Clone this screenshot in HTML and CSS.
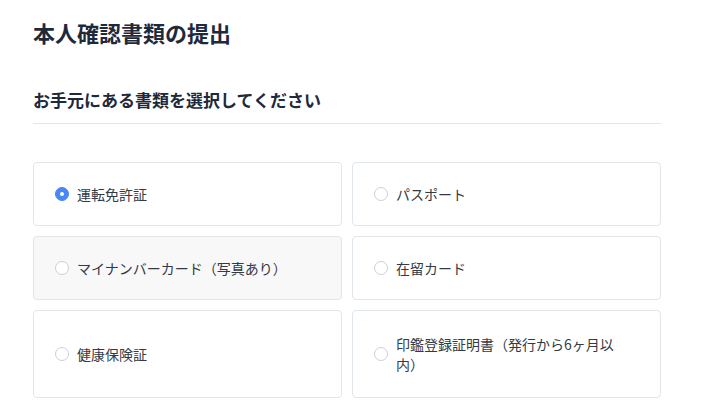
FILE: index.html
```html
<!DOCTYPE html>
<html lang="ja">
<head>
<meta charset="utf-8">
<title>本人確認書類の提出</title>
<link rel="stylesheet" href="styles.css">
</head>
<body>
<main class="page">
  <h1 class="title">本人確認書類の提出</h1>
  <h2 class="subtitle">お手元にある書類を選択してください</h2>
  <div class="options">
    <label class="option">
      <span class="radio radio-checked"></span>
      <span class="option-text">運転免許証</span>
    </label>
    <label class="option">
      <span class="radio"></span>
      <span class="option-text">パスポート</span>
    </label>
    <label class="option option-hover">
      <span class="radio"></span>
      <span class="option-text">マイナンバーカード（写真あり）</span>
    </label>
    <label class="option">
      <span class="radio"></span>
      <span class="option-text">在留カード</span>
    </label>
    <label class="option">
      <span class="radio"></span>
      <span class="option-text">健康保険証</span>
    </label>
    <label class="option option-tall">
      <span class="radio"></span>
      <span class="option-text">印鑑登録証明書（発行から6ヶ月以内）</span>
    </label>
  </div>
</main>
</body>
</html>
```
FILE: styles.css
```css
* {
  box-sizing: border-box;
}

html, body {
  margin: 0;
  padding: 0;
  background: #ffffff;
}

body {
  font-family: "Noto Sans CJK JP", "Noto Sans", sans-serif;
  color: #1f2937;
}

.page {
  width: 724px;
  padding: 18px 63px 0 33px;
}

.title {
  margin: 0;
  font-size: 22px;
  line-height: 28px;
  font-weight: 700;
  color: #1e293b;
}

.subtitle {
  margin: 42px 0 0;
  padding-bottom: 11px;
  border-bottom: 1px solid #e2e6ea;
  font-size: 17px;
  line-height: 24px;
  font-weight: 700;
  color: #1e293b;
}

.options {
  margin-top: 38px;
  display: grid;
  grid-template-columns: 1fr 1fr;
  gap: 10px;
}

.option {
  display: flex;
  align-items: center;
  gap: 8px;
  padding: 21px 36px 21px 21px;
  border: 1px solid #e1e6ea;
  border-radius: 4px;
  background: #ffffff;
  cursor: pointer;
}

.option-tall {
  padding-top: 23px;
  padding-bottom: 23px;
}

.option-hover {
  background: #f8f8f9;
}

.radio {
  flex: 0 0 14px;
  width: 14px;
  height: 14px;
  border-radius: 50%;
  border: 1.5px solid #cbd0d5;
  background: #ffffff;
  position: relative;
}

.radio-checked {
  border-color: #4a86f5;
  background: #4a86f5;
}

.radio-checked::after {
  content: "";
  position: absolute;
  left: 3.5px;
  top: 3.5px;
  width: 4px;
  height: 4px;
  border-radius: 50%;
  background: #ffffff;
}

.option-text {
  font-size: 14px;
  line-height: 20px;
  color: #333a44;
}
```
